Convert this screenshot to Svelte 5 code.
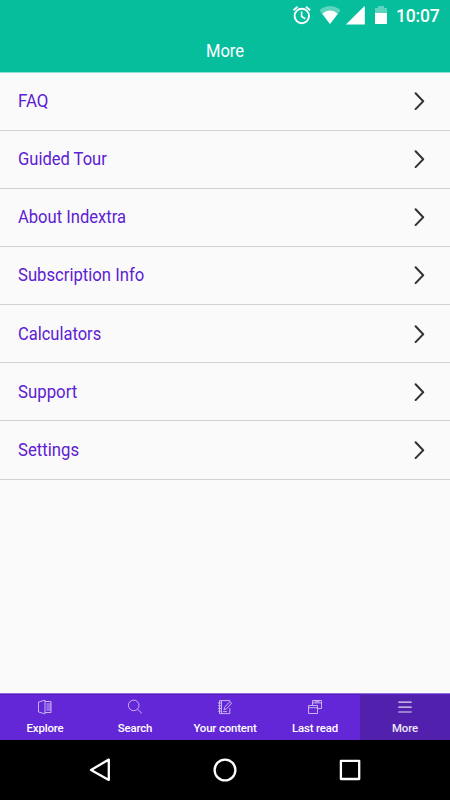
<script lang="ts">
    type Row = { label: string; stretch: number };

    // The menu face is slightly condensed, stretch is the horizontal scale of a label
    const rows: Row[] = [
        { label: "FAQ", stretch: 0.96 },
        { label: "Guided Tour", stretch: 0.94 },
        { label: "About Indextra", stretch: 0.942 },
        { label: "Subscription Info", stretch: 0.947 },
        { label: "Calculators", stretch: 0.938 },
        { label: "Support", stretch: 0.955 },
        { label: "Settings", stretch: 0.95 },
    ];

    const tabs = ["Explore", "Search", "Your content", "Last read", "More"];
    let active = $state("More");
</script>

<div class="screen">
    <header>
        <div class="status-bar">
            <svg width="98" height="32" viewBox="290 0 98 32">
                <!-- Alarm -->
                <g fill="none" stroke="#fff" stroke-width="1.9">
                    <circle cx="301.8" cy="16" r="7.2" />
                    <path d="M301.6 11.5v5l3.7 2.2" stroke-width="1.6" />
                    <path d="M293.5 10.2l4.1-3.5M310.1 10.2L306 6.7" />
                </g>
                <!-- Wifi -->
                <path d="M319.5 10.2Q330 2 340.5 10.2L330 24z" fill="#fff" opacity="0.35" />
                <path d="M322.2 13.7Q330 7.5 337.8 13.7L330 24z" fill="#fff" />
                <!-- Signal -->
                <path d="M364.8 5.8v18.6h-18.9z" fill="#fff" />
                <!-- Battery -->
                <path d="M375 13V8h3V6h6v2h3v5z" fill="#fff" opacity="0.35" />
                <path d="M375 13h12v11h-12z" fill="#fff" />
            </svg>
            <span class="clock">10:07</span>
        </div>
        <h1>More</h1>
    </header>

    <ul class="menu">
        {#each rows as row}
            <li>
                <span style="transform: scaleX({row.stretch})">{row.label}</span>
                <svg class="chevron" width="12" height="18" viewBox="0 0 12 18">
                    <path d="M2.6 1.3L10.2 9.2l-7.6 7.9" />
                </svg>
            </li>
        {/each}
    </ul>

    <nav>
        {#each tabs as tab}
            <button class:active={active === tab} onclick={() => (active = tab)}>
                <svg width="16" height="16" viewBox="0 0 16 16">
                    {#if tab === "Explore"}
                        <path d="M1.5 3L8 1.2v13.6L1.5 13zM8 2.5h6v11H8M9.5 5H14M9.5 7H14M9.5 9H14M9.5 11H14" />
                    {:else if tab === "Search"}
                        <circle cx="6.7" cy="6.4" r="5.3" />
                        <path d="M10.6 10.2l4.3 4.2" />
                    {:else if tab === "Your content"}
                        <path d="M12.8 2.3V1.6H2.5v13h10.3V9M1 4h3M1 6.7h3M1 9.4h3M1 12.1h3M4.5 1.6v13" />
                        <path d="M7 10.7l.7-2.5 5.2-5.6 1.8 1.6-5.3 5.7zM6 12.6h4" />
                    {:else if tab === "Last read"}
                        <path d="M5.5 6V1.5h9v8h-4M5.5 3.9h9M7.5 2.7h5" />
                        <path d="M1.5 6.5h9v8h-9zM1.5 8.7h9" />
                    {:else}
                        <path class="bars" d="M1.3 3.1h13.4M1.3 8.1h13.4M1.3 13h13.4" />
                    {/if}
                </svg>
                <span>{tab}</span>
            </button>
        {/each}
    </nav>

    <footer>
        <svg width="24" height="24" viewBox="0 0 24 24">
            <path d="M20.8 1.6v20.3L3 11.9z" />
        </svg>
        <svg width="24" height="24" viewBox="0 0 24 24">
            <circle cx="12" cy="12" r="10.4" />
        </svg>
        <svg width="24" height="24" viewBox="0 0 24 24">
            <rect x="2.9" y="2.8" width="18.3" height="18.2" />
        </svg>
    </footer>
</div>

<style>
    :global(body) {
        margin: 0;
        background: #fafafa;
    }

    .screen {
        display: flex;
        flex-direction: column;
        width: 450px;
        height: 800px;
        font-family: Roboto, "Liberation Sans", sans-serif;
        background: #fafafa;
    }

    header {
        height: 72px;
        border-bottom: 1px solid #8fe0cf;
        background: #06be9c;
        background-clip: padding-box;
        color: #fff;
    }

    .status-bar {
        display: flex;
        justify-content: flex-end;
        gap: 8px;
        height: 32px;
        padding-right: 10px;
    }
    .clock {
        width: 44px;
        padding-top: 5px;
        font-size: 17.5px;
        font-weight: 500;
        line-height: 22px;
        letter-spacing: -0.2px;
    }

    h1 {
        margin: 0;
        font-size: 17.6px;
        font-weight: 400;
        line-height: 38px;
        text-align: center;
        transform: scaleX(0.94);
    }

    .menu {
        display: grid;
        grid-template-rows: repeat(7, 1fr);
        height: 406.5px;
        margin: 0;
        padding: 0;
        list-style: none;
    }
    .menu li {
        display: flex;
        align-items: center;
        justify-content: space-between;
        padding: 0 25px 0.57px 17.5px;
        border-bottom: 1px solid #d2d2d2;
        color: #5d20d2;
        font-size: 17.6px;
    }
    .menu span {
        transform-origin: left center;
    }
    .chevron {
        fill: none;
        stroke: #333;
        stroke-width: 2;
        stroke-linecap: round;
        stroke-linejoin: round;
    }

    nav {
        display: grid;
        grid-template-columns: repeat(5, 1fr);
        box-sizing: border-box;
        height: 47px;
        margin-top: auto;
        border-top: 1px solid #8f6be0;
        background: #6427d7;
    }
    button {
        display: flex;
        flex-direction: column;
        align-items: center;
        padding: 4px 0 0;
        border: 0;
        border-top: 1px solid #5720bd;
        background: none;
        color: #fff;
        font: 500 11.4px/14px Roboto, sans-serif;
        letter-spacing: -0.15px;
    }
    button.active {
        background: #5120ac;
        color: #efe9f8;
    }
    button svg {
        margin-bottom: 6px;
        fill: none;
        stroke: #d3c2f5;
        stroke-width: 0.9;
    }
    .bars {
        stroke: #e4dcf4;
        stroke-width: 1.2;
    }

    footer {
        display: flex;
        justify-content: space-between;
        align-items: center;
        height: 60px;
        padding: 0 88px;
        background: #000;
    }
    footer svg {
        fill: none;
        stroke: #fff;
        stroke-width: 2.3;
        stroke-linejoin: round;
    }
</style>
